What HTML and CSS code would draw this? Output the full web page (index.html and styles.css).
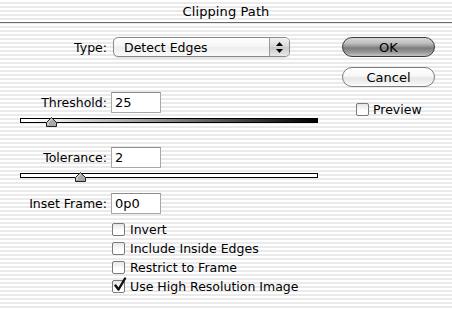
FILE: index.html
```html
<!DOCTYPE html>
<html>
<head>
<meta charset="utf-8">
<link rel="stylesheet" href="styles.css">
</head>
<body>
<div class="window">
  <div class="titlebar">Clipping Path</div>
  <div class="dialog">
    <div class="left">
      <div class="row row-type">
        <span class="label">Type:</span>
        <div class="popup">
          <span class="popup-text">Detect Edges</span>
          <span class="popup-arrows">
            <svg width="7" height="11" viewBox="0 0 7 11"><polygon points="3.5,0 7,4 0,4" fill="#000"/><polygon points="0,7 7,7 3.5,11" fill="#000"/></svg>
          </span>
        </div>
      </div>

      <div class="row row-threshold">
        <span class="label">Threshold:</span>
        <div class="input">25</div>
      </div>
      <div class="slider slider-grad">
        <svg class="thumb" style="left:25px" width="11" height="10" viewBox="0 0 11 10"><path d="M5.5 0.5 L10.5 5.5 L10.5 9.5 L0.5 9.5 L0.5 5.5 Z" fill="#a8a8a8" stroke="#222" stroke-width="1"/><path d="M5.5 2 L2 5.5 L2 8" fill="none" stroke="#eee" stroke-width="1"/></svg>
      </div>

      <div class="row row-tolerance">
        <span class="label">Tolerance:</span>
        <div class="input">2</div>
      </div>
      <div class="slider slider-plain">
        <svg class="thumb" style="left:54px" width="11" height="10" viewBox="0 0 11 10"><path d="M5.5 0.5 L10.5 5.5 L10.5 9.5 L0.5 9.5 L0.5 5.5 Z" fill="#a8a8a8" stroke="#222" stroke-width="1"/><path d="M5.5 2 L2 5.5 L2 8" fill="none" stroke="#eee" stroke-width="1"/></svg>
      </div>

      <div class="row row-inset">
        <span class="label">Inset Frame:</span>
        <div class="input">0p0</div>
      </div>

      <div class="checks">
        <label class="check"><span class="box"></span>Invert</label>
        <label class="check"><span class="box"></span>Include Inside Edges</label>
        <label class="check"><span class="box"></span>Restrict to Frame</label>
        <label class="check"><span class="box checked"><svg class="tick" width="14" height="15" viewBox="0 0 14 15"><path d="M2.5 8.5 L5.5 12.5 L12 1.5" fill="none" stroke="#111" stroke-width="2.4" stroke-linejoin="round" stroke-linecap="round"/></svg></span>Use High Resolution Image</label>
      </div>
    </div>

    <div class="right">
      <div class="btn btn-default">OK</div>
      <div class="btn btn-normal">Cancel</div>
      <label class="check preview"><span class="box"></span>Preview</label>
    </div>
  </div>
</div>
</body>
</html>
```

FILE: styles.css
```css
html, body {
  margin: 0;
  padding: 0;
}
body {
  width: 452px;
  height: 309px;
  overflow: hidden;
  font-family: "DejaVu Sans", "Liberation Sans", sans-serif;
  font-size: 12.5px;
  color: #000;
  background: repeating-linear-gradient(to bottom, #ffffff 0px, #ffffff 2px, #eaeaea 2px, #eaeaea 4px);
}
.window {
  width: 452px;
  height: 309px;
}
.titlebar {
  height: 22px;
  border-bottom: 1px solid #6b6b6b;
  display: flex;
  align-items: center;
  justify-content: center;
  font-size: 13px;
  letter-spacing: 0.1px;
  border-radius: 5px 5px 0 0;
}
.dialog {
  display: flex;
}
.left {
  width: 340px;
}
.row {
  display: flex;
  align-items: center;
}
.label {
  width: 107px;
  text-align: right;
  flex: none;
}
.row-type {
  margin-top: 14px;
  height: 20px;
}
.popup {
  margin-left: 6px;
  width: 177px;
  height: 20px;
  box-sizing: border-box;
  border: 1px solid #8a8a8a;
  border-radius: 5px;
  background: linear-gradient(to bottom, #ffffff 0%, #f4f4f4 50%, #ececec 51%, #fafafa 100%);
  display: flex;
  align-items: center;
  box-shadow: 0 1px 1px rgba(0,0,0,0.12);
}
.popup-text {
  flex: 1;
  padding-left: 10px;
}
.popup-arrows {
  width: 19px;
  height: 18px;
  border-left: 1px solid #9a9a9a;
  border-radius: 0 4px 4px 0;
  background: linear-gradient(to bottom, #f2f2f2 0%, #d6d6d6 50%, #c8c8c8 51%, #e8e8e8 100%);
  display: flex;
  align-items: center;
  justify-content: center;
}
.input {
  margin-left: 4px;
  width: 50px;
  height: 21px;
  box-sizing: border-box;
  border: 1px solid #a8a8a8;
  border-top-color: #8c8c8c;
  background: #fff;
  padding-left: 3px;
  line-height: 19px;
  font-size: 13px;
}
.row-threshold {
  margin-top: 35px;
}
.row-tolerance {
  margin-top: 24px;
}
.row-inset {
  margin-top: 15px;
}
.slider {
  position: relative;
  margin-top: 5px;
  margin-left: 20px;
  width: 298px;
  height: 5px;
  box-sizing: border-box;
  border: 1px solid #000;
}
.slider-grad {
  background: linear-gradient(to right, #ffffff 0%, #ffffff 4%, #000000 100%);
}
.slider-plain {
  background: #fff;
}
.thumb {
  position: absolute;
  top: -2px;
}
.checks {
  margin-top: 6px;
  padding-left: 112px;
}
.check {
  display: flex;
  align-items: center;
  height: 19px;
}
.box {
  position: relative;
  width: 13px;
  height: 13px;
  box-sizing: border-box;
  border: 1px solid #7a7a7a;
  border-radius: 2px;
  background: linear-gradient(to bottom, #e6e6e6 0%, #ffffff 60%, #ffffff 100%);
  margin-right: 5px;
  flex: none;
}
.tick {
  position: absolute;
  left: 0px;
  top: -4px;
}
.right {
  margin-left: 2px;
  display: flex;
  flex-direction: column;
}
.btn {
  width: 93px;
  height: 20px;
  box-sizing: border-box;
  border-radius: 10px;
  display: flex;
  align-items: center;
  justify-content: center;
  font-size: 13px;
}
.btn-default {
  margin-top: 14px;
  border: 1px solid #3c3c3c;
  background: linear-gradient(to bottom, #d8d8d8 0%, #bdbdbd 30%, #8e8e8e 50%, #7a7a7a 55%, #9a9a9a 80%, #c4c4c4 100%);
}
.btn-normal {
  margin-top: 10px;
  border: 1px solid #7d7d7d;
  background: linear-gradient(to bottom, #ffffff 0%, #f7f7f7 45%, #e6e6e6 55%, #f2f2f2 85%, #ffffff 100%);
}
.preview {
  margin-top: 14px;
  padding-left: 14px;
  height: 16px;
}
.preview .box {
  margin-right: 4px;
}
```
